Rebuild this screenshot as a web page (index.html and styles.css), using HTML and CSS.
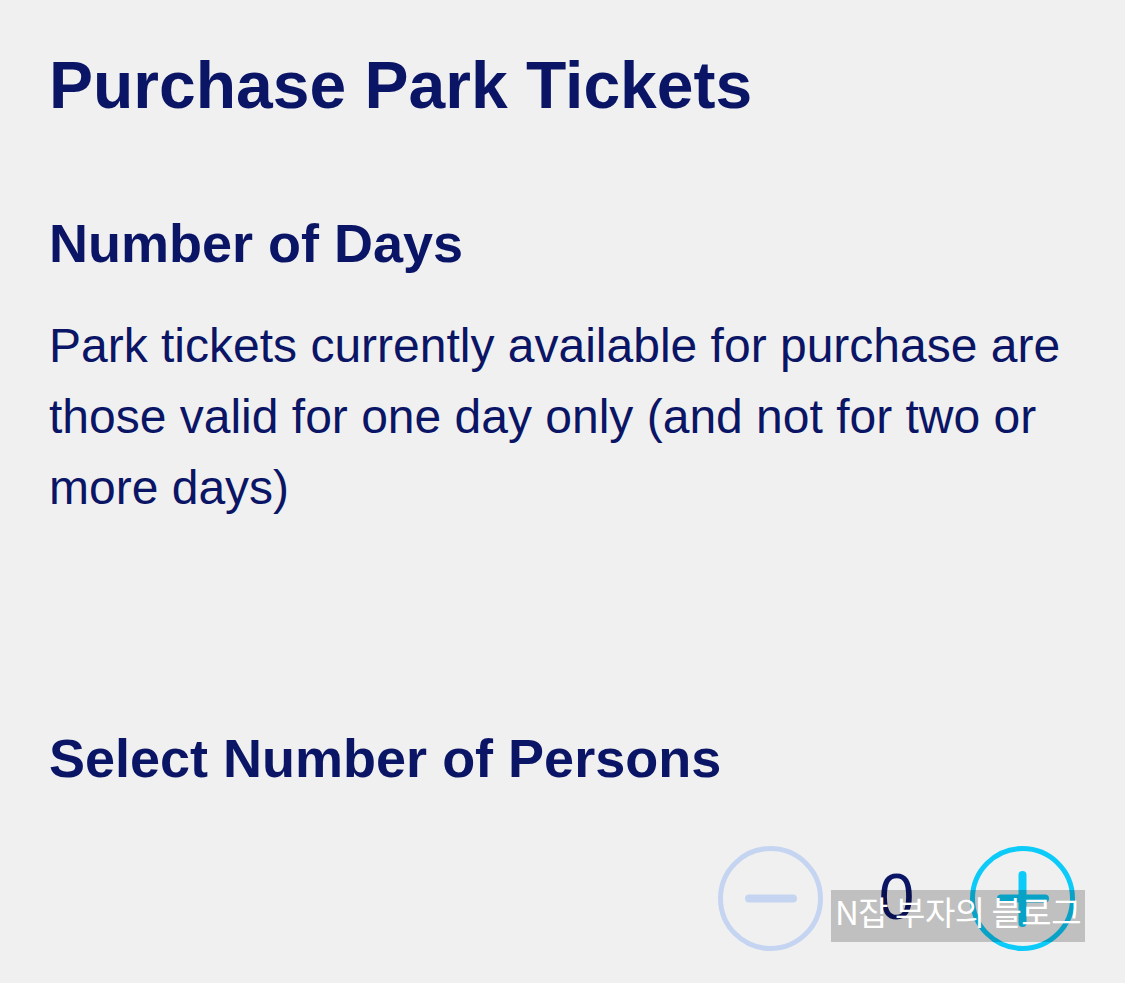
FILE: index.html
```html
<!DOCTYPE html>
<html lang="en">
<head>
  <meta charset="UTF-8" />
  <meta name="viewport" content="width=device-width, initial-scale=1" />
  <title>Purchase Park Tickets</title>
  <link rel="stylesheet" href="styles.css">
</head>
<body>
  <main class="page">
    <h1>Purchase Park Tickets</h1>

    <section class="days">
      <h2>Number of Days</h2>
      <p>Park tickets currently available for purchase are those valid for one day only (and not for two or more days)</p>
    </section>

    <section class="persons">
      <h2>Select Number of Persons</h2>
      <div class="counter">
        <button class="btn-step btn-minus" aria-label="Decrease">
          <svg width="105" height="105" viewBox="0 0 105 105">
            <circle cx="52.5" cy="52.5" r="50" fill="none" stroke="#c5d5f1" stroke-width="5" />
            <line x1="31" y1="52.5" x2="75" y2="52.5" stroke="#c5d5f1" stroke-width="8" stroke-linecap="round" />
          </svg>
        </button>
        <span class="count" id="count">0</span>
        <button class="btn-step btn-plus" aria-label="Increase">
          <svg width="105" height="105" viewBox="0 0 105 105">
            <circle cx="52.5" cy="52.5" r="50" fill="none" stroke="#0ccbf9" stroke-width="5" />
            <line x1="31" y1="52.5" x2="75" y2="52.5" stroke="#0ccbf9" stroke-width="8" stroke-linecap="round" />
            <line x1="52.5" y1="29" x2="52.5" y2="77" stroke="#0ccbf9" stroke-width="8" stroke-linecap="round" />
          </svg>
        </button>
      </div>
    </section>
  </main>

  <div class="watermark">N잡 부자의 블로그</div>
</body>
</html>
```

FILE: styles.css
```css
*, *::before, *::after {
  box-sizing: border-box;
}
body {
  font-family: 'Liberation Sans', Arial, Helvetica, sans-serif;
  background: #f0f0f0;
  color: #0b1566;
  margin: 0;
  position: relative;
  min-height: 983px;
}
.page {
  padding: 45px 49px 0;
}
h1 {
  font-size: 66px;
  line-height: 80px;
  font-weight: 700;
  margin: 0;
}
h2 {
  font-size: 54px;
  line-height: 64px;
  font-weight: 700;
  margin: 0;
}
.days {
  margin-top: 86px;
}
.days p {
  font-size: 48px;
  line-height: 71px;
  margin: 35px 0 0;
}
.persons {
  margin-top: 203px;
}
.counter {
  display: flex;
  justify-content: flex-end;
  align-items: center;
  margin-top: 56px;
  margin-right: 1px;
}
.btn-step {
  background: none;
  border: none;
  padding: 0;
  width: 105px;
  height: 105px;
  cursor: pointer;
}
.btn-step svg {
  display: block;
}
.count {
  width: 147px;
  text-align: center;
  font-size: 64px;
  line-height: 1;
  margin-top: -4px;
}
.watermark {
  position: absolute;
  left: 831px;
  top: 890px;
  width: 254px;
  height: 52px;
  background: rgba(0, 0, 0, 0.2);
  color: #fff;
  font-family: 'Noto Sans CJK KR', 'Noto Sans', sans-serif;
  font-size: 33px;
  line-height: 42px;
  text-align: center;
  white-space: nowrap;
  letter-spacing: -0.5px;
}
```
